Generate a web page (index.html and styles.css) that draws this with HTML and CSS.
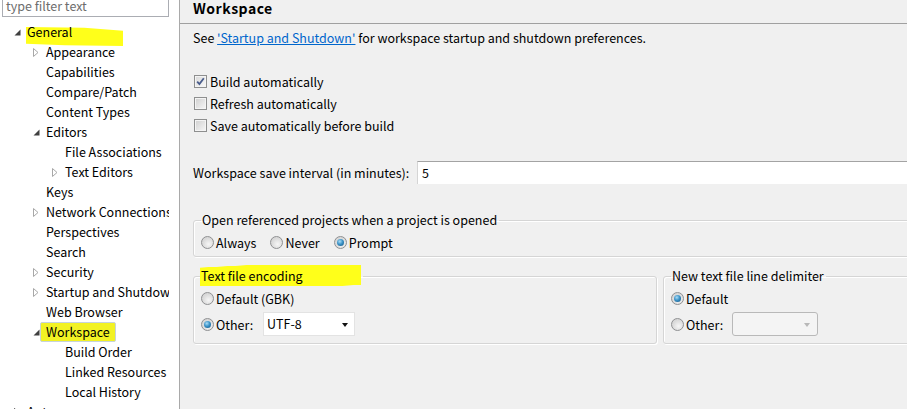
FILE: index.html
```html
<!DOCTYPE html>
<html>
<head>
<meta charset="utf-8">
<link rel="stylesheet" href="styles.css">
</head>
<body>
<div class="app">
  <aside class="sidebar">
    <div class="filter">type filter text</div>
    <ul class="tree">
      <li class="row l0"><span class="tw"><svg width="7" height="7" viewBox="0 0 7 7"><path d="M6.5 0.5 L6.5 6.5 L0.5 6.5 Z" fill="#404040"/></svg></span><span class="label mark-general">General</span></li>
      <li class="row l1"><span class="tw"><svg width="6" height="9" viewBox="0 0 6 9"><path d="M0.5 0.5 L5 4.5 L0.5 8.5 Z" fill="#fff" stroke="#a8a8a8"/></svg></span><span class="label">Appearance</span></li>
      <li class="row l1"><span class="tw"></span><span class="label">Capabilities</span></li>
      <li class="row l1"><span class="tw"></span><span class="label">Compare/Patch</span></li>
      <li class="row l1"><span class="tw"></span><span class="label">Content Types</span></li>
      <li class="row l1"><span class="tw"><svg width="7" height="7" viewBox="0 0 7 7"><path d="M6.5 0.5 L6.5 6.5 L0.5 6.5 Z" fill="#404040"/></svg></span><span class="label">Editors</span></li>
      <li class="row l2"><span class="tw"></span><span class="label">File Associations</span></li>
      <li class="row l2"><span class="tw"><svg width="6" height="9" viewBox="0 0 6 9"><path d="M0.5 0.5 L5 4.5 L0.5 8.5 Z" fill="#fff" stroke="#a8a8a8"/></svg></span><span class="label">Text Editors</span></li>
      <li class="row l1"><span class="tw"></span><span class="label">Keys</span></li>
      <li class="row l1"><span class="tw"><svg width="6" height="9" viewBox="0 0 6 9"><path d="M0.5 0.5 L5 4.5 L0.5 8.5 Z" fill="#fff" stroke="#a8a8a8"/></svg></span><span class="label">Network Connections</span></li>
      <li class="row l1"><span class="tw"></span><span class="label">Perspectives</span></li>
      <li class="row l1"><span class="tw"></span><span class="label">Search</span></li>
      <li class="row l1"><span class="tw"><svg width="6" height="9" viewBox="0 0 6 9"><path d="M0.5 0.5 L5 4.5 L0.5 8.5 Z" fill="#fff" stroke="#a8a8a8"/></svg></span><span class="label">Security</span></li>
      <li class="row l1"><span class="tw"><svg width="6" height="9" viewBox="0 0 6 9"><path d="M0.5 0.5 L5 4.5 L0.5 8.5 Z" fill="#fff" stroke="#a8a8a8"/></svg></span><span class="label">Startup and Shutdown</span></li>
      <li class="row l1"><span class="tw"></span><span class="label">Web Browser</span></li>
      <li class="row l1"><span class="tw"><svg width="7" height="7" viewBox="0 0 7 7"><path d="M6.5 0.5 L6.5 6.5 L0.5 6.5 Z" fill="#404040"/></svg></span><span class="label selected">Workspace</span></li>
      <li class="row l2"><span class="tw"></span><span class="label">Build Order</span></li>
      <li class="row l2"><span class="tw"></span><span class="label">Linked Resources</span></li>
      <li class="row l2"><span class="tw"></span><span class="label">Local History</span></li>
      <li class="row l0"><span class="tw"><svg width="6" height="9" viewBox="0 0 6 9"><path d="M0.5 0.5 L5 4.5 L0.5 8.5 Z" fill="#fff" stroke="#404040"/></svg></span><span class="label">Ant</span></li>
    </ul>
  </aside>
  <main class="page">
    <div class="page-title">Workspace</div>
    <div class="content">
      <div class="see">See <a class="link" href="#">'Startup and Shutdown'</a> for workspace startup and shutdown preferences.</div>
      <div class="checks">
        <div class="opt"><span class="cb checked"><svg width="9" height="9" viewBox="0 0 9 9"><path d="M1.2 4.6 L3.4 7 L7.8 1.2" fill="none" stroke="#4a5d8c" stroke-width="1.8"/></svg></span>Build automatically</div>
        <div class="opt"><span class="cb"></span>Refresh automatically</div>
        <div class="opt"><span class="cb"></span>Save automatically before build</div>
      </div>
      <div class="interval">
        <span class="interval-label">Workspace save interval (in minutes):</span>
        <div class="textbox">5</div>
      </div>
      <fieldset class="group group-wide">
        <legend>Open referenced projects when a project is opened</legend>
        <div class="radios">
          <div class="opt"><span class="rb"></span>Always</div>
          <div class="opt"><span class="rb"></span>Never</div>
          <div class="opt"><span class="rb on"></span>Prompt</div>
        </div>
      </fieldset>
      <div class="groups">
        <fieldset class="group group-enc">
          <legend><span class="mark-enc">Text file encoding</span></legend>
          <div class="opt"><span class="rb"></span>Default (GBK)</div>
          <div class="opt tall"><span class="rb on"></span><span class="other">Other:</span><div class="combo">UTF-8<span class="caret"></span></div></div>
        </fieldset>
        <fieldset class="group group-delim">
          <legend>New text file line delimiter</legend>
          <div class="opt"><span class="rb on"></span>Default</div>
          <div class="opt tall"><span class="rb"></span><span class="other">Other:</span><div class="combo disabled"><span class="caret"></span></div></div>
        </fieldset>
      </div>
    </div>
  </main>
</div>
</body>
</html>
```
FILE: styles.css
```css
* { box-sizing: border-box; }
html, body { margin: 0; padding: 0; }
body {
  width: 907px;
  height: 409px;
  overflow: hidden;
  font-family: "Noto Sans CJK SC", "Noto Sans", sans-serif;
  font-size: 12px;
  color: #000;
  background: #f0f0f0;
}
.app { display: flex; height: 409px; }

.sidebar {
  width: 180px;
  flex: none;
  background: #fff;
  border-right: 1px solid #a9a9a9;
  overflow: hidden;
}
.filter {
  margin: -5px 0 0 2px;
  width: 167px;
  height: 22px;
  border: 1px solid #abadb3;
  color: #6d6d6d;
  font-size: 12.5px;
  line-height: 20px;
  padding: 0 0 0 3px;
}
.tree {
  list-style: none;
  margin: 5px 0 0;
  padding: 0;
  width: 169px;
  overflow: hidden;
}
.row {
  height: 20px;
  display: flex;
  align-items: center;
  white-space: nowrap;
  font-size: 12.5px;
}
.l0 { padding-left: 8px; }
.l1 { padding-left: 27px; }
.l2 { padding-left: 46px; }
.tw {
  width: 19px;
  flex: none;
  display: flex;
  align-items: center;
  padding-left: 6px;
}
.label { position: relative; line-height: 18px; }
.mark-general { z-index: 0; }
.mark-general::before {
  content: "";
  position: absolute;
  left: -1px;
  top: 4px;
  width: 97px;
  height: 19px;
  background: #ffff1a;
  clip-path: polygon(0 0, 60% 4%, 100% 20%, 100% 100%, 40% 96%, 0 88%);
  z-index: -1;
}
.selected {
  margin-left: -6px;
  padding: 0 5px;
  height: 20px;
  background: #f2f224;
  border: 1px solid #c6d3dc;
  border-radius: 2px;
}

.page { flex: 1; min-width: 0; }
.page-title {
  height: 24px;
  padding: 0 0 0 13px;
  font-weight: bold;
  font-size: 14px;
  letter-spacing: 0.5px;
  line-height: 16px;
  border-bottom: 1px solid #a0a0a0;
}
.content { padding: 0 0 0 13px; margin-right: -12px; }
.see { margin-top: 5px; line-height: 18px; font-size: 12.5px; }
.link { color: #0066cc; text-decoration: underline; }

.checks { margin-top: 23px; }
.opt {
  display: flex;
  align-items: center;
  height: 22px;
  white-space: nowrap;
  font-size: 12.5px;
}
.cb {
  width: 13px; height: 13px;
  margin: 0 3px 0 1px;
  border: 1px solid #8e8f8f;
  background: linear-gradient(135deg, #cfcfcf, #f7f7f7);
  box-shadow: inset 0 0 0 1px #f4f4f4;
  display: flex; align-items: center; justify-content: center;
}
.cb.checked { background: linear-gradient(135deg, #d8d8d8, #fafafa); }

.interval { display: flex; align-items: center; margin-top: 25px; height: 23px; font-size: 12.5px; }
.interval-label { width: 224px; flex: none; }
.textbox {
  flex: 1;
  height: 23px;
  background: #fff;
  border-top: 1px solid #a3a3a3;
  border-left: 1px solid #d5d5d5;
  padding-left: 4px;
  line-height: 21px;
}

.group {
  margin: 0;
  min-width: 0;
  border: 1px solid #d5d5d5;
  border-radius: 3px;
  box-shadow: inset 1px 1px 0 #fff, 1px 1px 0 #fff;
  padding: 3px 0 3px 7px;
}
.group legend {
  padding: 0 2px 0 1px;
  line-height: 16px;
  font-size: 12.5px;
}
.group-wide { margin-top: 28px; }
.radios { display: flex; gap: 14px; }
.rb {
  position: relative;
  width: 13px; height: 13px;
  flex: none;
  border-radius: 50%;
  border: 1px solid #8f9092;
  background: radial-gradient(circle at 60% 65%, #f6f6f6 0, #dadada 60%, #cfcfcf 100%);
  margin-right: 2px;
}
.rb.on::after {
  content: "";
  position: absolute;
  left: 2px; top: 2px;
  width: 7px; height: 7px;
  border-radius: 50%;
  background: radial-gradient(circle at 40% 35%, #a9dcf6 0, #3d94c8 45%, #0e4f7e 100%);
}
.groups { display: flex; gap: 6px; margin-top: 11px; }
.group-enc { width: 464px; flex: none; padding-bottom: 6px; }
.group-delim { flex: 1; padding-bottom: 6px; }
.opt.tall { height: 26px; margin-top: 2px; }
.other { width: 47px; }
.combo {
  position: relative;
  width: 92px;
  height: 24px;
  background: #fff;
  border: 1px solid #e3e3e3;
  padding-left: 3px;
  line-height: 22px;
}
.combo .caret {
  position: absolute;
  right: 6px; top: 10px;
  border-left: 3.5px solid transparent;
  border-right: 3.5px solid transparent;
  border-top: 4px solid #111;
}
.combo.disabled {
  width: 86px;
  background: #f4f4f4;
  border: 1px solid #b9b9b9;
  border-radius: 3px;
}
.combo.disabled .caret { border-top-color: #b8b8b8; right: 7px; }
.group-delim .other { width: 46px; }
.mark-enc {
  background: linear-gradient(177deg, transparent 8%, #ffff1a 10%, #ffff1a 95%, transparent 97%);
  padding: 1px 58px 1px 1px;
  margin-left: -2px;
}
```
